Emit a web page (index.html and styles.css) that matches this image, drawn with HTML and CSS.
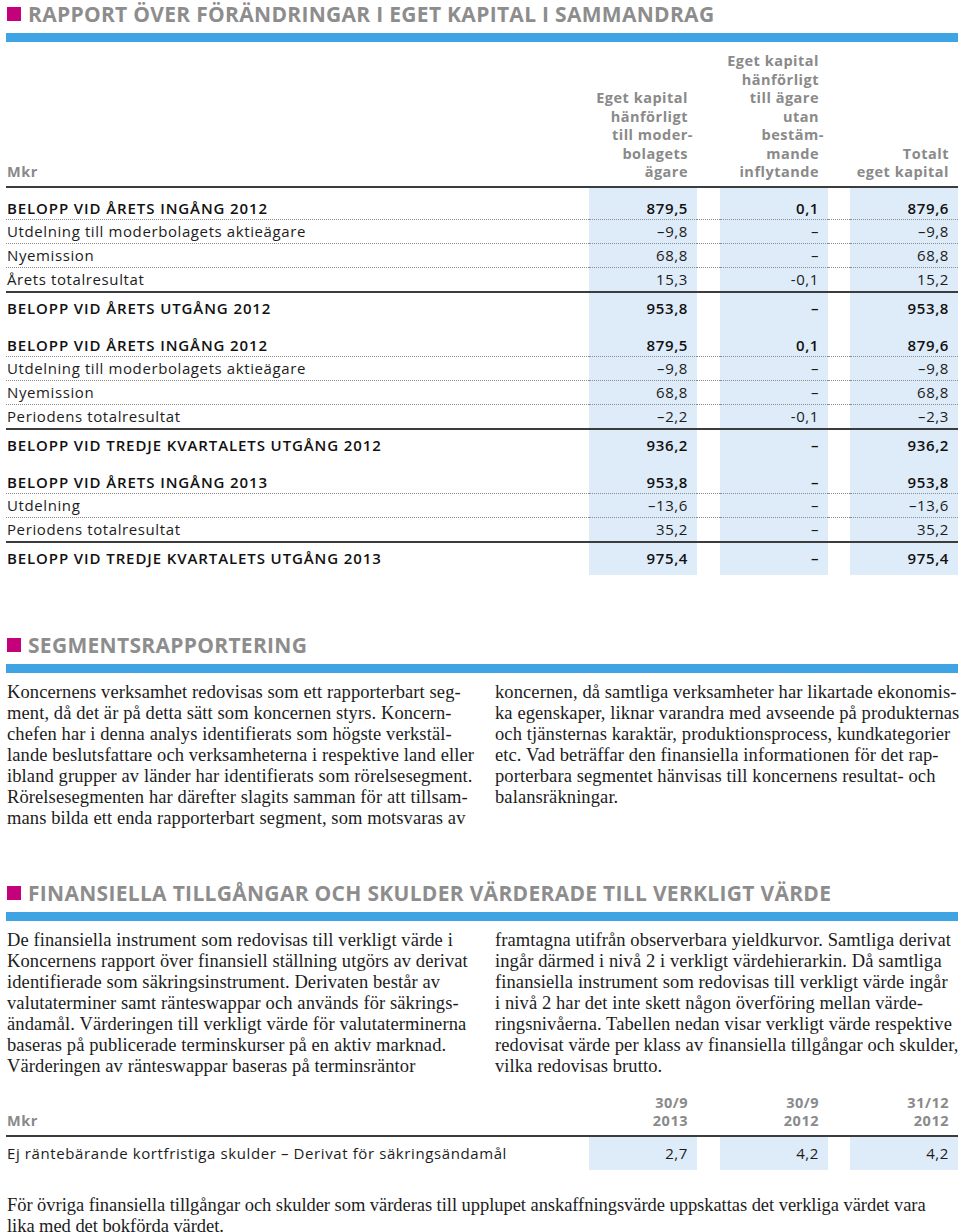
FILE: index.html
```html
<!DOCTYPE html>
<html lang="sv">
<head>
<meta charset="utf-8">
<title>Rapport</title>
<link rel="stylesheet" href="styles.css">
</head>
<body>
<div class="page">

  <section class="sec sec-equity">
    <h2 class="sec-title"><span class="sq"></span>RAPPORT ÖVER FÖRÄNDRINGAR I EGET KAPITAL I SAMMANDRAG</h2>
    <div class="bar"></div>
    <table class="fin">
      <colgroup>
        <col class="c-label"><col class="c-num"><col class="c-gap1"><col class="c-num"><col class="c-gap2"><col class="c-num">
      </colgroup>
      <thead>
        <tr>
          <th class="lbl">Mkr</th>
          <th class="num">Eget kapital<br>hänförligt<br>till moder<span class="hy">-</span><br>bolagets<br>ägare</th>
          <th class="gap"></th>
          <th class="num">Eget kapital<br>hänförligt<br>till ägare<br>utan<br>bestäm<span class="hy">-</span><br>mande<br>inflytande</th>
          <th class="gap"></th>
          <th class="num">Totalt<br>eget kapital</th>
        </tr>
      </thead>
      <tbody>
        <tr class="open"><td class="lbl">BELOPP VID ÅRETS INGÅNG 2012</td><td class="num">879,5</td><td class="gap"></td><td class="num">0,1</td><td class="gap"></td><td class="num">879,6</td></tr>
        <tr><td class="lbl">Utdelning till moderbolagets aktieägare</td><td class="num">–9,8</td><td class="gap"></td><td class="num">–</td><td class="gap"></td><td class="num">–9,8</td></tr>
        <tr><td class="lbl">Nyemission</td><td class="num">68,8</td><td class="gap"></td><td class="num">–</td><td class="gap"></td><td class="num">68,8</td></tr>
        <tr class="last"><td class="lbl">Årets totalresultat</td><td class="num">15,3</td><td class="gap"></td><td class="num">-0,1</td><td class="gap"></td><td class="num">15,2</td></tr>
        <tr class="sum"><td class="lbl">BELOPP VID ÅRETS UTGÅNG 2012</td><td class="num">953,8</td><td class="gap"></td><td class="num">–</td><td class="gap"></td><td class="num">953,8</td></tr>

        <tr class="open"><td class="lbl">BELOPP VID ÅRETS INGÅNG 2012</td><td class="num">879,5</td><td class="gap"></td><td class="num">0,1</td><td class="gap"></td><td class="num">879,6</td></tr>
        <tr><td class="lbl">Utdelning till moderbolagets aktieägare</td><td class="num">–9,8</td><td class="gap"></td><td class="num">–</td><td class="gap"></td><td class="num">–9,8</td></tr>
        <tr><td class="lbl">Nyemission</td><td class="num">68,8</td><td class="gap"></td><td class="num">–</td><td class="gap"></td><td class="num">68,8</td></tr>
        <tr class="last"><td class="lbl">Periodens totalresultat</td><td class="num">–2,2</td><td class="gap"></td><td class="num">-0,1</td><td class="gap"></td><td class="num">–2,3</td></tr>
        <tr class="sum"><td class="lbl">BELOPP VID TREDJE KVARTALETS UTGÅNG 2012</td><td class="num">936,2</td><td class="gap"></td><td class="num">–</td><td class="gap"></td><td class="num">936,2</td></tr>

        <tr class="open"><td class="lbl">BELOPP VID ÅRETS INGÅNG 2013</td><td class="num">953,8</td><td class="gap"></td><td class="num">–</td><td class="gap"></td><td class="num">953,8</td></tr>
        <tr><td class="lbl">Utdelning</td><td class="num">–13,6</td><td class="gap"></td><td class="num">–</td><td class="gap"></td><td class="num">–13,6</td></tr>
        <tr class="last"><td class="lbl">Periodens totalresultat</td><td class="num">35,2</td><td class="gap"></td><td class="num">–</td><td class="gap"></td><td class="num">35,2</td></tr>
        <tr class="sum"><td class="lbl">BELOPP VID TREDJE KVARTALETS UTGÅNG 2013</td><td class="num">975,4</td><td class="gap"></td><td class="num">–</td><td class="gap"></td><td class="num">975,4</td></tr>
      </tbody>
    </table>
  </section>

  <section class="sec sec-segment">
    <h2 class="sec-title"><span class="sq"></span>SEGMENTSRAPPORTERING</h2>
    <div class="bar"></div>
    <div class="cols">
      <p class="txt">Koncernens verksamhet redovisas som ett rapporterbart seg-<br>ment, då det är på detta sätt som koncernen styrs. Koncern-<br>chefen har i denna analys identifierats som högste verkstäl-<br>lande beslutsfattare och verksamheterna i respektive land eller<br>ibland grupper av länder har identifierats som rörelsesegment.<br>Rörelsesegmenten har därefter slagits samman för att tillsam-<br>mans bilda ett enda rapporterbart segment, som motsvaras av</p>
      <p class="txt">koncernen, då samtliga verksamheter har likartade ekonomis-<br>ka egenskaper, liknar varandra med avseende på produkternas<br>och tjänsternas karaktär, produktionsprocess, kundkategorier<br>etc. Vad beträffar den finansiella informationen för det rap-<br>porterbara segmentet hänvisas till koncernens resultat- och<br>balansräkningar.</p>
    </div>
  </section>

  <section class="sec sec-fair">
    <h2 class="sec-title"><span class="sq"></span>FINANSIELLA TILLGÅNGAR OCH SKULDER VÄRDERADE TILL VERKLIGT VÄRDE</h2>
    <div class="bar"></div>
    <div class="cols">
      <p class="txt">De finansiella instrument som redovisas till verkligt värde i<br>Koncernens rapport över finansiell ställning utgörs av derivat<br>identifierade som säkringsinstrument. Derivaten består av<br>valutaterminer samt ränteswappar och används för säkrings-<br>ändamål. Värderingen till verkligt värde för valutaterminerna<br>baseras på publicerade terminskurser på en aktiv marknad.<br>Värderingen av ränteswappar baseras på terminsräntor</p>
      <p class="txt">framtagna utifrån observerbara yieldkurvor. Samtliga derivat<br>ingår därmed i nivå 2 i verkligt värdehierarkin. Då samtliga<br>finansiella instrument som redovisas till verkligt värde ingår<br>i nivå 2 har det inte skett någon överföring mellan värde-<br>ringsnivåerna. Tabellen nedan visar verkligt värde respektive<br>redovisat värde per klass av finansiella tillgångar och skulder,<br>vilka redovisas brutto.</p>
    </div>
    <table class="fin fin-small">
      <colgroup>
        <col class="c-label"><col class="c-num"><col class="c-gap1"><col class="c-num"><col class="c-gap2"><col class="c-num">
      </colgroup>
      <thead>
        <tr>
          <th class="lbl">Mkr</th>
          <th class="num">30/9<br>2013</th>
          <th class="gap"></th>
          <th class="num">30/9<br>2012</th>
          <th class="gap"></th>
          <th class="num">31/12<br>2012</th>
        </tr>
      </thead>
      <tbody>
        <tr class="single"><td class="lbl">Ej räntebärande kortfristiga skulder – Derivat för säkringsändamål</td><td class="num">2,7</td><td class="gap"></td><td class="num">4,2</td><td class="gap"></td><td class="num">4,2</td></tr>
      </tbody>
    </table>
    <p class="txt foot">För övriga finansiella tillgångar och skulder som värderas till upplupet anskaffningsvärde uppskattas det verkliga värdet vara<br>lika med det bokförda värdet.</p>
  </section>

</div>
</body>
</html>
```

FILE: styles.css
```css
* { box-sizing: border-box; }

html, body {
  margin: 0;
  padding: 0;
  background: #ffffff;
}

.page {
  width: 960px;
  padding: 2px 2px 0 6px;
  font-family: "Open Sans", "DejaVu Sans", sans-serif;
  color: #1c1c1c;
}

.sec-title {
  display: flex;
  align-items: center;
  gap: 7px;
  margin: 0;
  height: 24px;
  padding-left: 1px;
  font-family: "Open Sans", sans-serif;
  font-weight: 700;
  font-size: 21px;
  letter-spacing: 0.3px;
  color: #8d8d8d;
  white-space: nowrap;
}

.sq {
  display: block;
  width: 14px;
  height: 14px;
  background: #c4007a;
  flex: none;
}

.bar {
  height: 9px;
  margin-top: 7px;
  background: #3ea4e4;
}

/* tables */
.fin {
  width: 952px;
  table-layout: fixed;
  border-collapse: separate;
  border-spacing: 0;
  margin-top: 10px;
  font-size: 15px;
  letter-spacing: 0.6px;
}

.c-label { width: 583px; }
.c-num { width: 108px; }
.c-gap1 { width: 23px; }
.c-gap2 { width: 22px; }

.fin th {
  font-weight: 700;
  color: #8a8a8a;
  vertical-align: bottom;
  line-height: 18.5px;
  padding: 0 0 4px 0;
  border-bottom: 2px solid #3c3c3c;
  font-size: 14.5px;
  letter-spacing: 0.5px;
}

.fin th.lbl { text-align: left; padding-left: 1px; }
.fin th.num { text-align: right; padding-right: 9px; }

.hy { margin-right: -5px; }

.fin td {
  padding: 0;
  height: 24px;
  line-height: 23px;
  border-bottom: 1px dotted #8c8c8c;
  white-space: nowrap;
}

.fin td.lbl { padding-left: 1px; }
.fin td.num {
  text-align: right;
  padding-right: 9px;
  background: #deebf8;
}

.fin tr.open td {
  font-weight: 600;
  color: #111;
  height: 32px;
  padding-top: 10px;
  line-height: 21px;
}
.fin tr.open td.lbl,
.fin tr.sum td.lbl { letter-spacing: 0.9px; }
.fin tr.open td.lbl { padding-left: 1px; }
.fin tr.open td.num { padding-right: 9px; }

.fin tr.last td {
  border-bottom: 2px solid #3c3c3c;
}

.fin tr.sum td {
  font-weight: 600;
  color: #111;
  height: 32px;
  line-height: 31px;
  border-bottom: none;
}

/* text columns */
.cols {
  display: grid;
  grid-template-columns: 488px 1fr;
  margin-top: 9px;
}

.txt {
  margin: 0;
  font-family: "Liberation Serif", "Times New Roman", serif;
  font-size: 18.5px;
  letter-spacing: 0.1px;
  line-height: 21px;
  color: #1c1c1c;
  white-space: nowrap;
  padding-left: 1px;
}

.sec-segment { margin-top: 58px; }
.sec-fair { margin-top: 52px; }

.fin-small { margin-top: 17px; }
.fin-small th { line-height: 18px; padding-bottom: 5px; }
.fin tr.single td {
  height: 33px;
  line-height: 33px;
  border-bottom: none;
}

.foot {
  margin-top: 25px;
  letter-spacing: -0.05px;
}
```
